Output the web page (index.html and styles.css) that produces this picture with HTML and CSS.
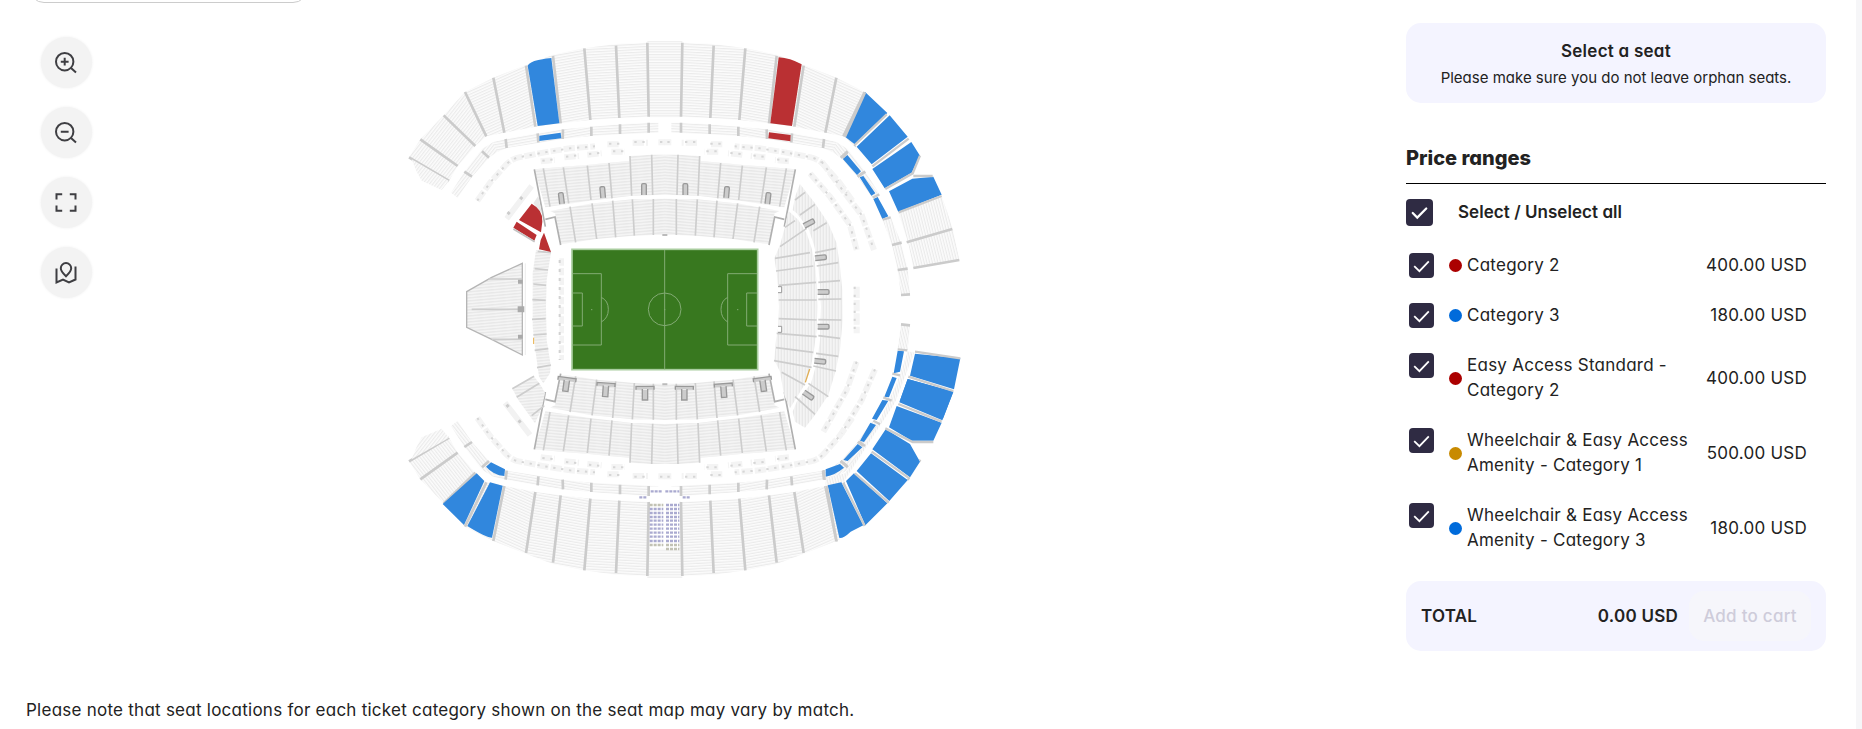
FILE: index.html
```html
<!DOCTYPE html>
<html lang="en">
<head>
    <meta charset="UTF-8">
    <meta name="viewport" content="width=device-width, initial-scale=1.0">
    <title>Select a seat</title>
    <link rel="stylesheet" href="styles.css">
</head>
<body>
    <div class="page">
        <main class="map-area">
            <div class="filter-box"></div>
            <div class="map-row">
                <div class="controls">
                    <button class="control" aria-label="Zoom in">
                        <svg viewBox="0 0 24 24"><circle cx="10.7" cy="10.7" r="8.7"/><path d="M17 17l5 4.600M6.800 10.700h7.800M10.700 6.800v7.800"/></svg>
                    </button>
                    <button class="control" aria-label="Zoom out">
                        <svg viewBox="0 0 24 24"><circle cx="10.7" cy="10.7" r="8.7"/><path d="M17 17l5 4.600M6.800 10.700h7.800"/></svg>
                    </button>
                    <button class="control" aria-label="Full view">
                        <svg viewBox="0 0 24 24"><path d="M2.500 8.500V3.300h5.700M15.800 3.300h5.700v5.200M21.500 14.500v5.200h-5.700M8.200 19.700H2.500v-5.200"/></svg>
                    </button>
                    <button class="control" aria-label="Show map">
                        <svg viewBox="0 0 24 24"><path d="M2.500 7.500v14l6.500-3 6 3 6.500-3V5.500"/><path d="M12 15.300c-3.500-3.300-5.200-5.200-5.200-8a5.200 5.200 0 0 1 10.400 0c0 2.800-1.700 4.700-5.200 8z"/></svg>
                    </button>
                </div>
                <svg class="stadium" viewBox="0 0 1740 1680">
                    <defs>
                        <pattern id="rows" width="12" height="8" patternUnits="userSpaceOnUse">
                            <rect width="12" height="8" fill="#fcfcfc"/>
                            <rect width="12" height="3.500" fill="#ebebeb"/>
                        </pattern>
                        <pattern id="rows3" href="#rows" patternTransform="rotate(-3)"/>
                        <pattern id="rows9" href="#rows" patternTransform="rotate(-10)"/>
                        <pattern id="rows25" href="#rows" patternTransform="rotate(-24)"/>
                        <pattern id="rows50" href="#rows" patternTransform="rotate(-52)"/>
                        <pattern id="rows80" href="#rows" patternTransform="rotate(76)"/>
                        <pattern id="inner" width="12" height="9" patternUnits="userSpaceOnUse" patternTransform="rotate(-5)">
                            <rect width="12" height="9" fill="#f4f4f4"/>
                            <rect width="12" height="4" fill="#e8e8e8"/>
                        </pattern>
                        <pattern id="innerV" href="#inner" patternTransform="rotate(90)"/>

                        <!-- one quarter of the bowl, mirrored for the others -->
                        <g id="quarter">
                            <path fill="url(#rows50)" d="M57 382L91 328L161 256L225 186L289 319L256 348L203 408L177 453Z"/>
                            <path fill="url(#rows25)" d="M225 186L310 143L408 105L436 290L343 308L289 319Z"/>
                            <path fill="url(#rows9)" d="M408 105L489 74L583 55L601 270L512 280L436 290Z"/>
                            <path fill="url(#rows3)" d="M583 55L678 42L772 38L776 260L688 264L601 270Z"/>
                            <path fill="url(#rows)" d="M772 33H825V262H776Z"/>
                            <path fill="url(#rows50)" d="M183 488L223 425L256 383L276 357L310 336L330 360L297 383L246 440L203 503Z"/>
                            <path fill="url(#rows9)" d="M310 336L347 327L443 310L519 298L604 290V318L518 327L445 339L350 354L322 366Z"/>
                            <path fill="url(#rows3)" d="M604 290L690 283L776 278L805 278V308L690 313L604 318Z"/>
                            <g class="aisle">
                                <path d="M57 382L177 453M91 328L203 408M161 256L256 348M225 186L289 319M310 143L343 308M408 107L436 290M489 78L512 280M583 55L601 270M678 47L688 264M772 38L776 260"/>
                                <path d="M223 425L246 440M276 364L297 383M347 327L350 354M443 310L445 337M519 298L518 327M604 290V318M690 283V312M776 278V308"/>
                            </g>
                            <!-- suites -->
                            <g class="suites">
                                <path d="M262 512L301 457L349 403Q366 386 386 382L464 367L540 355L615 349M652 343H690M728 338H774M805 337H825M452 394L494 390M523 382L567 378M592 374L635 370M664 365H705"/>
                                <path class="suite-dots" d="M262 512L301 457L349 403Q366 386 386 382L464 367L540 355L615 349M657 341H690M733 336H774M810 336H825M457 392L494 388M528 380L567 376M597 372L635 368M669 364H705"/>
                            </g>
                            <!-- inner stand -->
                            <path fill="url(#inner)" d="M433 418L520 410L590 405L657 398L718 393L720 378L785 374H825V494L725 497L600 512L466 532Z"/>
                            <path fill="url(#inner)" d="M480 543L600 521L727 508L825 506V615H790L733 617L677 622L620 627L555 637L512 642L495 550Z"/>
                            <path class="stair" d="M460 415L480 530M520 412L536 520M592 407L603 510M657 399L666 505M720 378L725 497M785 374L788 495M540 530L557 637M606 520L620 627M668 512L677 622M727 508L733 617M790 507V615"/>
                            <path class="stair dark" d="M433 418L466 590M466 568L495 561L512 645"/>
                        </g>
                        <g id="gate"><path d="M-7 17V-13Q-7 -17 -3 -17H3Q7 -17 7 -13V17"/></g>
                        <g id="pocket"><path d="M-27 5V-5H27V5M-8 3V36H8V3"/></g>
                    </defs>

                    <use href="#quarter"/>
                    <use href="#quarter" transform="translate(1649 0) scale(-1 1)"/>
                    <use href="#quarter" transform="translate(0 1676) scale(1 -1)"/>
                    <use href="#quarter" transform="translate(1649 1676) scale(-1 -1)"/>

                    <path fill="url(#rows50)" d="M65 388L177 453L155 480L95 452L80 425Z"/>
                    <path fill="url(#rows50)" d="M65 1288L177 1223L155 1196L95 1222L80 1250Z"/>
                    <path class="strip" d="M350 566L425 468M345 1118L420 1215"/>
                    <path class="strip-dots" d="M353 553L420 473M350 1124L418 1212"/>

                    <!-- gates, north and south -->
                    <g class="gate">
                        <use href="#gate" transform="translate(514 505) rotate(-7)"/>
                        <use href="#gate" transform="translate(638 487) rotate(-5)"/>
                        <use href="#gate" x="762" y="478"/>
                        <use href="#gate" x="886" y="478"/>
                        <use href="#gate" transform="translate(1010 487) rotate(5)"/>
                        <use href="#gate" transform="translate(1134 505) rotate(7)"/>
                        <use href="#pocket" transform="translate(531 1048) rotate(8)"/>
                        <use href="#pocket" transform="translate(648 1064) rotate(4)"/>
                        <use href="#pocket" x="765" y="1074"/>
                        <use href="#pocket" x="883" y="1074"/>
                        <use href="#pocket" transform="translate(1000 1066) rotate(-4)"/>
                        <use href="#pocket" transform="translate(1117 1048) rotate(-8)"/>
                    </g>
                    <path fill="#bbb" d="M817 612h15v6h-15zM817 1060h15v6h-15z"/>

                    <!-- west stands -->
                    <path fill="url(#inner)" stroke="#b5b5b5" stroke-width="4" d="M230 785L305 742L397 700V975L305 928L230 892Z"/>
                    <path class="stair" d="M295 747H397M245 838H397M305 928H397"/>
                    <path fill="#aaa" d="M384 749h14v12h-14zM383 829h20v18h-20zM384 914h14v12h-14z"/>
                    <path stroke="#e4e4e4" stroke-width="2" d="M406 700V975"/>
                    <path fill="url(#inner)" d="M438 660L428 730V890L436 960L447 1040L460 1060L480 1030L482 1005L470 930L468 830L470 750L483 668Z"/>
                    <path class="stair" d="M443 664L483 668M434 716L474 720M430 762L468 766M427 809L467 811M426 868L467 866M430 915L470 912M434 961L475 956M441 1013L483 1005"/>
                    <path fill="url(#inner)" d="M367 1076L432 1039L455 1070L465 1090L455 1135L435 1180L385 1110Z"/>
                    <path class="stair" d="M367 1076L432 1039M380 1102L448 1060M425 1157L463 1127"/>
                    <path fill="#e8e8e8" d="M430 520L445 497L455 550Z"/>
                    <path class="bench" d="M515 685V990"/>
                    <path class="bench dark" d="M509 690V990"/>
                    <path stroke="#e8b04a" stroke-width="3" d="M431 923V942"/>

                    <!-- east stands -->
                    <g transform="translate(870 630)">
                        <path fill="url(#innerV)" d="M325 -88L355 -60L380 -20L395 25L405 70L410 130L412 200L410 270L402 330L392 385L370 440L330 505L312 465L300 395L283 360L288 300L295 260L297 200L295 150L290 100L283 55L300 15L315 -40Z"/>
                        <path fill="url(#innerV)" d="M360 -168L405 -110L445 -50L470 10L480 80L487 150L488 240L480 330L465 400L445 465L405 525L375 563L345 545L338 515L350 485L393 430L411 365L420 300L423 200L420 130L413 65L402 15L385 -35L350 -80L338 -90L345 -130Z"/>
                        <path class="stair" d="M285 55L390 38M288 93L400 78M297 136L408 127M296 180H410M296 236L410 240M290 280L410 290M288 323L400 337M282 362L395 382M305 397L375 435M405 38L468 25M410 78L475 68M415 127L480 122M415 178L484 177M415 239L484 240M415 287L480 295M408 340L475 349M400 378L468 393M385 430L445 470M345 470L405 523M300 20L380 -35M315 -38L345 -58M360 -75L405 -107M345 -120L375 -143M400 -28L440 -52"/>
                        <g class="gate">
                            <use href="#gate" transform="translate(387 -50) rotate(62)"/>
                            <use href="#gate" transform="translate(422 53) rotate(84)"/>
                            <use href="#gate" transform="translate(430 156) rotate(90)"/>
                            <use href="#gate" transform="translate(430 260) rotate(90)"/>
                            <use href="#gate" transform="translate(420 364) rotate(96)"/>
                            <use href="#gate" transform="translate(385 466) rotate(125)"/>
                        </g>
                        <path fill="#fff" stroke="#999" stroke-width="3" d="M294 140h11v18h-11M294 259h11v18h-11"/>
                        <path stroke="#e0ae55" stroke-width="4" fill="none" d="M389 387L376 427"/>
                        <path class="suites" d="M390 -200L450 -130L510 -45L530 30M425 -235L480 -160L545 -75L582 30M530 140V280M530 365L500 450L430 575M585 388L545 480L485 580"/>
                        <path class="suite-dots" d="M390 -200L450 -130L510 -45L530 30M425 -235L480 -160L545 -75L582 30M524 140V280M530 365L500 450L430 575M585 388L545 480L485 580"/>
                        <path fill="url(#rows80)" d="M655 -82L785 -133L818 -35L838 60L700 84L685 10Z"/>
                        <path fill="url(#rows80)" d="M607 -63L632 -70L663 8L683 86L690 163L663 165L653 90L636 15ZM663 253L690 256L683 330L653 327Z"/>
                        <path class="aisle" d="M680 7L817 -33M700 84L838 60M636 15L665 8M653 90L683 86M663 165L690 163M663 253L690 256"/>
                        <path fill="url(#rows80)" d="M683 334L703 338L640 500L560 620L490 730L437 745V715L495 700L590 560L650 430Z"/>
                    </g>

                    <!-- pitch -->
                    <rect x="546" y="658" width="557" height="361" fill="#38781f" stroke="#a9cd9f" stroke-width="5"/>
                    <g class="pitch-lines">
                        <path d="M824 660V1018M548 731H634V945H548M548 789H577V888H548M1101 731H1013V945H1101M1101 789H1070V888H1101"/>
                        <path d="M634 802Q655 812 655 838T634 876M1013 802Q993 812 993 838T1013 876"/>
                        <circle cx="824" cy="838" r="49"/>
                        <path d="M603 839h4M822 839h4M1041 839h4"/>
                    </g>

                    <!-- category 3 -->
                    <g class="cat3">
                        <path d="M413 107Q418 96 445 90T484 84L508 280L443 288ZM448 317L512 308L514 325L448 333Z"/>
                        <g transform="translate(0 1110)">
                            <path d="M158 312L260 220L283 243L222 375ZM300 247L338 257L306 413Q288 413 232 378ZM288 200L303 187L345 208L343 228Q310 225 288 200Z"/>
                        </g>
                        <g transform="translate(870 0)">
                            <path fill="#fff" d="M556 187L640 249L735 370L700 430L614 480L524 343L495 320Z"/>
                            <path d="M556 187L622 249L524 343L495 320ZM629 256L683 320L575 403L530 350ZM694 336L720 377L695 428L614 475L577 417ZM760 440L785 494L655 546L627 484L697 446Z"/>
                            <path d="M502 375L543 424L531 435L488 386ZM550 438L586 490L574 497L539 442ZM593 501L625 559L607 567L580 507Z"/>
                        </g>
                        <g transform="translate(870 630)">
                            <path d="M705 341L841 355L822 448L690 407ZM683 417L820 455L787 541L658 487ZM653 332L672 334L660 395L641 400ZM637 410L650 414L627 472L613 470Z"/>
                        </g>
                        <g transform="translate(870 1110)">
                            <path fill="#fff" d="M495 240L650 0L800 60L770 125L700 130L722 190L556 385L480 420Z"/>
                            <path d="M650 18L785 68L760 122H695L627 82ZM617 88L690 132L720 185L690 232L577 148ZM573 160L683 240L628 303L530 213ZM522 220L622 310L556 376L498 243ZM443 256L484 247L550 376L512 395Q490 416 478 414Z"/>
                            <path d="M683 -63L820 -25L787 61L658 7Z"/>
                            <path d="M607 0L625 2L590 60L576 56ZM571 68L588 75L552 126L540 122ZM533 132L547 142L503 183L490 180ZM437 208L480 192L492 203Q465 225 437 230Z"/>
                        </g>
                    </g>
                    <g class="aisle thin">
                        <path d="M1425 188L1365 320M1490 253L1394 345M1556 326L1447 409M1590 377L1568 430L1486 477M1570 438H1628M1655 498L1526 547M1358 384L1372 368M1403 440L1420 427M1448 503L1468 493M1478 569L1502 562"/>
                        <path d="M1575 965L1711 985M1555 1040L1690 1083M1525 1122L1655 1175M1486 1195L1568 1236H1630M1445 1265L1558 1345M1395 1330L1496 1418M1360 1358L1424 1488M1310 1368L1340 1535M1523 958L1552 961M1507 1031L1530 1036M1480 1102L1505 1112M1450 1172L1470 1183M1407 1234L1425 1248M1352 1293L1372 1308M1301 1320L1304 1350"/>
                    </g>

                    <!-- category 2 -->
                    <g class="cat2">
                        <path d="M1166 82Q1200 84 1235 103L1206 288L1141 280ZM1137 307L1202 315L1201 334L1135 325Z"/>
                        <path d="M425 521Q460 540 457 575L453 607L387 570ZM380 575L440 615L433 632L370 593ZM462 608L483 666L447 658L452 630Z"/>
                    </g>
                    <path stroke="#c4c4c4" stroke-width="5" d="M370 597L434 635"/>

                    <!-- wheelchair rows -->
                    <path fill="#fff" d="M780 1370H868V1420H780ZM780 1417H868V1556H780Z"/>
                    <g class="wheelchair">
                        <path d="M782 1384H818M826 1384H868M748 1402H770M878 1402H900M779 1437H820M828 1437H868M779 1449H820M828 1449H868M779 1461H820M828 1461H868M779 1472H820M828 1472H868M779 1484H820M828 1484H868M779 1496H820M828 1496H868M779 1508H820M828 1508H868M779 1520H820M828 1520H868M779 1533H820M828 1533H868M828 1425H868"/>
                        <path class="companion" d="M779 1425H820M779 1545H820M828 1545H868M828 1557H868"/>
                    </g>
                </svg>
            </div>
            <p class="note">Please note that seat locations for each ticket category shown on the seat map may vary by match.</p>
        </main>

        <aside class="sidebar">
            <div class="hint">
                <h2>Select a seat</h2>
                <p>Please make sure you do not leave orphan seats.</p>
            </div>

            <h3 class="ranges-title">Price ranges</h3>
            <div class="select-all">
                <span class="checkbox large"><svg viewBox="0 0 24 24"><path d="M6 12.500l4 4 8-8"/></svg></span>
                <span>Select / Unselect all</span>
            </div>
            <ul class="ranges">
                <li>
                    <span class="checkbox"><svg viewBox="0 0 24 24"><path d="M5 12.500l5 5 9-9.500"/></svg></span>
                    <span class="dot red"></span>
                    <span class="name">Category 2</span>
                    <span class="price">400.00 USD</span>
                </li>
                <li>
                    <span class="checkbox"><svg viewBox="0 0 24 24"><path d="M5 12.500l5 5 9-9.500"/></svg></span>
                    <span class="dot blue"></span>
                    <span class="name">Category 3</span>
                    <span class="price">180.00 USD</span>
                </li>
                <li>
                    <span class="checkbox"><svg viewBox="0 0 24 24"><path d="M5 12.500l5 5 9-9.500"/></svg></span>
                    <span class="dot red"></span>
                    <span class="name">Easy Access Standard - Category 2</span>
                    <span class="price">400.00 USD</span>
                </li>
                <li>
                    <span class="checkbox"><svg viewBox="0 0 24 24"><path d="M5 12.500l5 5 9-9.500"/></svg></span>
                    <span class="dot gold"></span>
                    <span class="name">Wheelchair &amp; Easy Access Amenity - Category 1</span>
                    <span class="price">500.00 USD</span>
                </li>
                <li>
                    <span class="checkbox"><svg viewBox="0 0 24 24"><path d="M5 12.500l5 5 9-9.500"/></svg></span>
                    <span class="dot blue"></span>
                    <span class="name">Wheelchair &amp; Easy Access Amenity - Category 3</span>
                    <span class="price">180.00 USD</span>
                </li>
            </ul>

            <div class="total">
                <span>TOTAL</span>
                <span class="amount">0.00 USD</span>
                <button class="add" disabled>Add to cart</button>
            </div>
        </aside>
    </div>
</body>
</html>
```
FILE: styles.css
```css
* {
    box-sizing: border-box;
}
body {
    margin: 0;
    font-family: Inter, "Open Sans", sans-serif;
    font-feature-settings: "cv11";
    font-size: 17px;
    line-height: 25px;
    letter-spacing: 0.25px;
    color: #222;
    background: #fff;
}
h2, h3, p, ul {
    margin: 0;
    padding: 0;
}
.page {
    display: flex;
    justify-content: space-between;
    height: 729px;
    overflow: hidden;
    border-right: 6px solid #f6f6f8;
}

/* seat map */
.map-area {
    width: 1380px;
}
.filter-box {
    width: 279px;
    height: 45px;
    margin: -42px 0 0 29px;
    border: 1px solid #ccc;
    border-radius: 15px;
}
.map-row {
    display: flex;
    align-items: flex-start;
    height: 694px;
    padding: 27px 0 0 40px;
}
.controls {
    display: flex;
    flex-direction: column;
    gap: 19px;
    width: 350px;
    padding-top: 7px;
}
.control {
    display: flex;
    align-items: center;
    justify-content: center;
    width: 51px;
    height: 51px;
    margin-left: 0.5px;
    padding: 0 1px 0 0;
    border: 0;
    border-radius: 50%;
    background: #f3f3f3;
    box-shadow: 0 0 3px #eee;
}
.control svg {
    width: 24px;
    height: 24px;
    fill: none;
    stroke: #3e3e42;
    stroke-width: 2;
}
.stadium {
    width: 580px;
    height: 560px;
}
.aisle {
    fill: none;
    stroke: #cbcbcb;
    stroke-width: 8;
}
.aisle.thin {
    stroke-width: 7;
}
.stair {
    fill: none;
    stroke: #cdcdcd;
    stroke-width: 5;
}
.stair.dark {
    stroke: #b0b0b0;
    stroke-width: 5;
}
.suites {
    fill: none;
    stroke: #f4f4f4;
    stroke-width: 18;
    stroke-dasharray: 34 6;
}
.suite-dots {
    fill: none;
    stroke: #d6d6d6;
    stroke-width: 6;
    stroke-dasharray: 7 17;
}
.strip {
    stroke: #f2f2f2;
    stroke-width: 17;
}
.strip-dots {
    stroke: #ccc;
    stroke-width: 9;
    stroke-dasharray: 9 50;
}
.gate {
    fill: #ccc;
    stroke: #999;
    stroke-width: 4;
}
.bench {
    fill: none;
    stroke: #f3f3f3;
    stroke-width: 14;
    stroke-dasharray: 22 7;
}
.bench.dark {
    stroke: #d2d2d2;
    stroke-width: 6;
    stroke-dasharray: 9 18;
}
.pitch-lines {
    fill: none;
    stroke: #83ab74;
    stroke-width: 3;
}
.cat3 {
    fill: #3187dd;
}
.cat2 {
    fill: #ba3033;
}
.wheelchair {
    stroke: #aaaad0;
    stroke-width: 7;
    stroke-dasharray: 9 3;
}
.wheelchair .companion {
    stroke: #c2c2b4;
}
.note {
    padding-left: 26px;
    margin-top: 1px;
}

/* sidebar */
.sidebar {
    width: 450px;
    padding: 23px 30px 0 0;
}
.hint {
    height: 80px;
    padding-top: 15px;
    border-radius: 15px;
    background: #f4f4ff;
    text-align: center;
}
.hint h2 {
    font-size: 17px;
    font-weight: 600;
    line-height: 26px;
}
.hint p {
    font-size: 15px;
    line-height: 27px;
    letter-spacing: 0;
}
.ranges-title {
    margin-top: 40px;
    padding-bottom: 10px;
    border-bottom: 1px solid #000;
    font-size: 20px;
    font-weight: 800;
    line-height: 30px;
    letter-spacing: 0;
}
.select-all {
    display: flex;
    align-items: center;
    gap: 25px;
    margin-top: 15px;
    font-weight: 600;
    letter-spacing: 0.05px;
}
.checkbox {
    flex: none;
    align-self: flex-start;
    width: 25px;
    height: 25px;
    border-radius: 4px;
    background: #2f2b43;
}
.checkbox.large {
    width: 27px;
    height: 27px;
}
.checkbox svg {
    display: block;
    width: 100%;
    height: 100%;
    fill: none;
    stroke: #fff;
    stroke-width: 1.7;
}
.checkbox.large svg {
    stroke-width: 2;
    stroke-linecap: round;
}
.ranges {
    display: flex;
    flex-direction: column;
    gap: 25px;
    margin: 27px 19px 0 3px;
    list-style: none;
}
.ranges li {
    display: flex;
    align-items: center;
}
.dot {
    flex: none;
    width: 13px;
    height: 13px;
    margin: 0 5px 0 15px;
    border-radius: 50%;
}
.dot.red {
    background: #ab0000;
}
.dot.blue {
    background: #006bdb;
}
.dot.gold {
    background: #c88a00;
}
.name {
    width: 226px;
}
.price {
    flex: 1;
    text-align: right;
    white-space: nowrap;
}
.total {
    display: flex;
    align-items: center;
    height: 70px;
    margin-top: 28px;
    padding: 0 15px;
    border-radius: 15px;
    background: #f4f4ff;
    font-weight: 600;
}
.amount {
    margin-left: auto;
}
.add {
    width: 122px;
    height: 50px;
    margin-left: 11px;
    padding: 0;
    border: 0;
    border-radius: 15px;
    background: #f6f6fb;
    color: #ceccda;
    font: inherit;
    font-weight: 500;
    letter-spacing: 0.25px;
}
```
